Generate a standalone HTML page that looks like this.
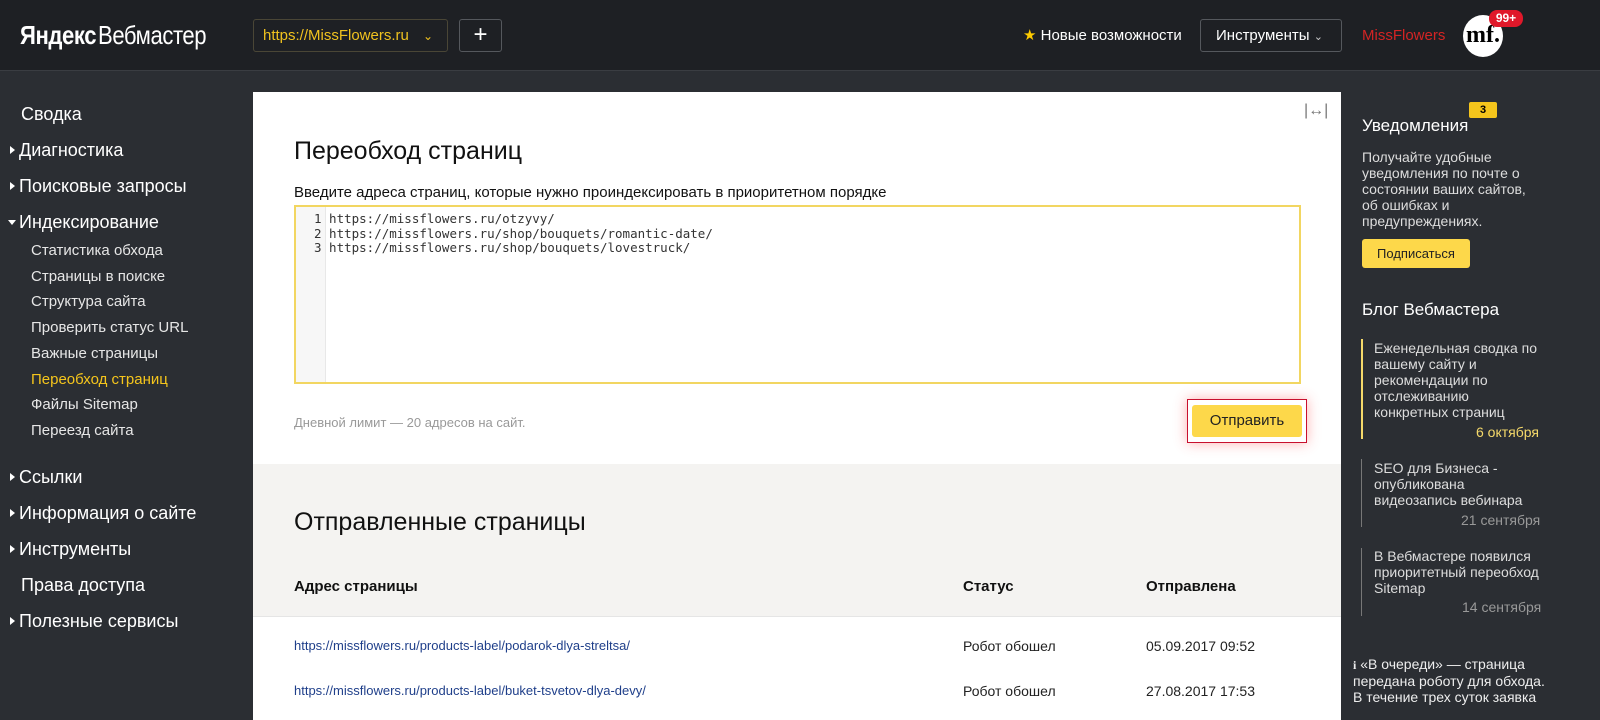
<!DOCTYPE html>
<html><head><meta charset="utf-8"><style>
*{margin:0;padding:0;box-sizing:border-box}
body{width:1600px;height:720px;overflow:hidden;background:#2b2e33;font-family:"Liberation Sans",Arial,sans-serif;color:#fff;position:relative}
.hdr{position:absolute;left:0;top:0;width:1600px;height:71px;background:#1e2024;border-bottom:1px solid #3a3d42}
.a{position:absolute;white-space:nowrap}
.nav{font-size:18px;color:#fff}
.sub{font-size:15px;color:#e6e6e6}
.tri{display:inline-block;width:0;height:0;border-left:5px solid #fff;border-top:4px solid transparent;border-bottom:4px solid transparent;margin-right:4px;vertical-align:2px}
.trid{display:inline-block;width:0;height:0;border-top:5px solid #fff;border-left:4px solid transparent;border-right:4px solid transparent;margin-right:3px;vertical-align:3px}
.main{position:absolute;left:253px;top:92px;width:1088px;height:628px;background:#f4f3f1}
.top{position:absolute;left:0;top:0;width:1088px;height:372px;background:#fff}
.rs{font-size:14px;color:#ddd;line-height:16px}
.link{color:#1f3f8a;font-size:13px}
.cell{font-size:14px;color:#222}
</style></head><body>
<div class="hdr">
<div class="a" style="left:20px;top:20px;font-size:26px;letter-spacing:-0.5px"><b style="font-weight:bold;transform:scaleX(.85);display:inline-block;transform-origin:left">Яндекс</b><span style="margin-left:-12px;font-weight:300;display:inline-block;transform:scaleX(.85);transform-origin:left">Вебмастер</span></div>
<div class="a" style="left:253px;top:19px;width:195px;height:33px;border:1px solid #4a4636;border-radius:3px;color:#f0c21f;font-size:15px;padding:7px 0 0 9px">https://MissFlowers.ru <span style="margin-left:10px;font-size:12px">&#8964;</span></div>
<div class="a" style="left:459px;top:19px;width:43px;height:33px;border:1px solid #55585d;border-radius:3px;font-size:24px;text-align:center;line-height:30px">+</div>
<div class="a" style="left:1023px;top:26px;font-size:15px"><span style="color:#ffcc00">★</span> Новые возможности</div>
<div class="a" style="left:1200px;top:19px;width:142px;height:33px;border:1px solid #55585d;border-radius:3px;font-size:15px;padding:7px 0 0 15px">Инструменты <span style="font-size:11px;color:#ccc">&#8964;</span></div>
<div class="a" style="left:1362px;top:27px;font-size:15px;color:#d32424">MissFlowers</div>
<div class="a" style="left:1463px;top:15px;width:40px;height:42px;border-radius:50%;background:#fff;color:#000;font-family:'Liberation Serif',serif;font-size:24px;text-align:center;line-height:40px;font-weight:bold">mf.</div>
<div class="a" style="left:1489px;top:10px;width:34px;height:17px;border-radius:8px;background:#e0182a;font-size:12px;font-weight:bold;text-align:center;line-height:17px">99+</div>
</div>
<div class="a nav" style="left:21px;top:104px">Сводка</div>
<div class="a nav" style="left:10px;top:140px"><span class="tri"></span>Диагностика</div>
<div class="a nav" style="left:10px;top:176px"><span class="tri"></span>Поисковые запросы</div>
<div class="a nav" style="left:8px;top:212px"><span class="trid"></span>Индексирование</div>
<div class="a sub" style="left:31px;top:242px">Статистика обхода</div>
<div class="a sub" style="left:31px;top:268px">Страницы в поиске</div>
<div class="a sub" style="left:31px;top:293px">Структура сайта</div>
<div class="a sub" style="left:31px;top:319px">Проверить статус URL</div>
<div class="a sub" style="left:31px;top:345px">Важные страницы</div>
<div class="a sub" style="left:31px;top:371px;color:#f5c51c">Переобход страниц</div>
<div class="a sub" style="left:31px;top:396px">Файлы Sitemap</div>
<div class="a sub" style="left:31px;top:422px">Переезд сайта</div>
<div class="a nav" style="left:10px;top:467px"><span class="tri"></span>Ссылки</div>
<div class="a nav" style="left:10px;top:503px"><span class="tri"></span>Информация о сайте</div>
<div class="a nav" style="left:10px;top:539px"><span class="tri"></span>Инструменты</div>
<div class="a nav" style="left:21px;top:575px">Права доступа</div>
<div class="a nav" style="left:10px;top:611px"><span class="tri"></span>Полезные сервисы</div>

<div class="main">
<div class="top">
<div class="a" style="left:1051px;top:10px;color:#777;font-size:16px">|↔|</div>
<div class="a" style="left:41px;top:45px;font-size:25px;color:#111">Переобход страниц</div>
<div class="a" style="left:41px;top:92px;font-size:15px;color:#111">Введите адреса страниц, которые нужно проиндексировать в приоритетном порядке</div>
<div class="a" style="left:41px;top:113px;width:1007px;height:179px;border:2px solid #f2d661;background:#fff">
<div style="position:absolute;left:0;top:0;width:30px;height:175px;background:#f7f7f7;border-right:1px solid #e8e8e8"></div>
<pre style="position:absolute;left:18px;top:5px;font-family:'DejaVu Sans Mono',monospace;font-size:12.5px;line-height:14.5px;color:#333">1 https://missflowers.ru/otzyvy/
2 https://missflowers.ru/shop/bouquets/romantic-date/
3 https://missflowers.ru/shop/bouquets/lovestruck/</pre></div>
<div class="a" style="left:41px;top:323px;font-size:13px;color:#999">Дневной лимит — 20 адресов на сайт.</div>
<div class="a" style="left:934px;top:307px;width:120px;height:44px;border:1px solid #c8102e;box-shadow:0 0 12px rgba(255,80,80,.45);background:#fff">
<div style="position:absolute;left:4px;top:5px;width:110px;height:32px;background:#fdd84a;border-radius:3px;color:#222;font-size:15px;text-align:center;line-height:32px">Отправить</div></div>
</div>
<div class="a" style="left:41px;top:416px;font-size:25px;color:#111">Отправленные страницы</div>
<div class="a" style="left:41px;top:486px;font-size:15px;font-weight:bold;color:#111">Адрес страницы</div>
<div class="a" style="left:710px;top:486px;font-size:15px;font-weight:bold;color:#111">Статус</div>
<div class="a" style="left:893px;top:486px;font-size:15px;font-weight:bold;color:#111">Отправлена</div>
<div class="a" style="left:0;top:524px;width:1088px;height:104px;background:#fff;border-top:1px solid #e5e5e5"></div>
<div class="a link" style="left:41px;top:546px">https://missflowers.ru/products-label/podarok-dlya-streltsa/</div>
<div class="a cell" style="left:710px;top:546px">Робот обошел</div>
<div class="a cell" style="left:893px;top:546px">05.09.2017 09:52</div>
<div class="a link" style="left:41px;top:591px">https://missflowers.ru/products-label/buket-tsvetov-dlya-devy/</div>
<div class="a cell" style="left:710px;top:591px">Робот обошел</div>
<div class="a cell" style="left:893px;top:591px">27.08.2017 17:53</div>
</div>

<div class="a" style="left:1469px;top:102px;width:28px;height:16px;background:#f5c51c;color:#000;font-size:11px;font-weight:bold;text-align:center;line-height:16px;border-radius:2px">3</div>
<div class="a" style="left:1362px;top:116px;font-size:17px">Уведомления</div>
<div class="a rs" style="left:1362px;top:149px;width:180px;white-space:normal">Получайте удобные уведомления по почте о состоянии ваших сайтов, об ошибках и предупреждениях.</div>
<div class="a" style="left:1362px;top:239px;width:108px;height:29px;background:#fdd84a;border-radius:3px;color:#222;font-size:13px;text-align:center;line-height:29px">Подписаться</div>
<div class="a" style="left:1362px;top:300px;font-size:17px">Блог Вебмастера</div>
<div class="a" style="left:1361px;top:339px;width:2px;height:100px;background:#f5d96a"></div>
<div class="a rs" style="left:1374px;top:340px;width:170px;white-space:normal">Еженедельная сводка по вашему сайту и рекомендации по отслеживанию конкретных страниц</div>
<div class="a" style="left:1476px;top:424px;font-size:14px;color:#f5d96a">6 октября</div>
<div class="a" style="left:1361px;top:459px;width:1px;height:68px;background:#777"></div>
<div class="a rs" style="left:1374px;top:460px;width:170px;white-space:normal">SEO для Бизнеса - опубликована видеозапись вебинара</div>
<div class="a" style="left:1461px;top:512px;font-size:14px;color:#999">21 сентября</div>
<div class="a" style="left:1361px;top:548px;width:1px;height:68px;background:#777"></div>
<div class="a rs" style="left:1374px;top:548px;width:170px;white-space:normal">В Вебмастере появился приоритетный переобход Sitemap</div>
<div class="a" style="left:1462px;top:599px;font-size:14px;color:#999">14 сентября</div>
<div class="a rs" style="left:1353px;top:656px;width:200px;white-space:normal;color:#eee"><span style="font-family:'Liberation Serif',serif;font-weight:bold;font-size:12px">i</span> «В очереди» — страница передана роботу для обхода. В течение трех суток заявка</div>
</body></html>
